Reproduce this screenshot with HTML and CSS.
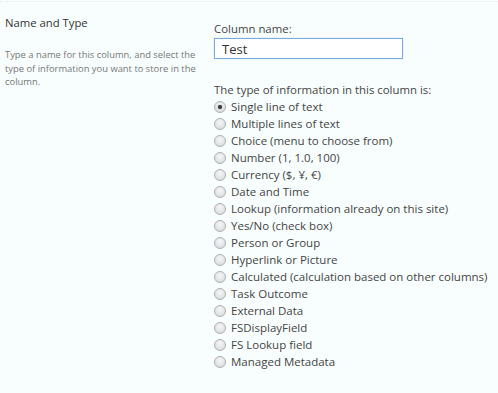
FILE: index.html
```html
<!DOCTYPE html>
<html>
<head>
<meta charset="utf-8">
<link rel="stylesheet" href="styles.css">
</head>
<body>
<div class="section">
  <div class="desc-col">
    <h3 class="title">Name and Type</h3>
    <p class="desc">Type a name for this column, and select the type of information you want to store in the column.</p>
  </div>
  <div class="field-col">
    <label class="label" for="colname">Column name:</label>
    <input id="colname" class="textbox" type="text" value="Test">
    <div class="label type-label">The type of information in this column is:</div>
    <div class="options">
      <label class="opt"><span class="radio checked"></span>Single line of text</label>
      <label class="opt"><span class="radio"></span>Multiple lines of text</label>
      <label class="opt"><span class="radio"></span>Choice (menu to choose from)</label>
      <label class="opt"><span class="radio"></span>Number (1, 1.0, 100)</label>
      <label class="opt"><span class="radio"></span>Currency ($, ¥, €)</label>
      <label class="opt"><span class="radio"></span>Date and Time</label>
      <label class="opt"><span class="radio"></span>Lookup (information already on this site)</label>
      <label class="opt"><span class="radio"></span>Yes/No (check box)</label>
      <label class="opt"><span class="radio"></span>Person or Group</label>
      <label class="opt"><span class="radio"></span>Hyperlink or Picture</label>
      <label class="opt"><span class="radio"></span>Calculated (calculation based on other columns)</label>
      <label class="opt"><span class="radio"></span>Task Outcome</label>
      <label class="opt"><span class="radio"></span>External Data</label>
      <label class="opt"><span class="radio"></span>FSDisplayField</label>
      <label class="opt"><span class="radio"></span>FS Lookup field</label>
      <label class="opt"><span class="radio"></span>Managed Metadata</label>
    </div>
  </div>
</div>
</body>
</html>
```
FILE: styles.css
```css
html, body {
  margin: 0;
  padding: 0;
  background: #f8fefe;
}
body {
  font-family: "Open Sans", "Noto Sans", sans-serif;
  color: #444;
  width: 498px;
  height: 393px;
  overflow: hidden;
}
.section {
  display: flex;
  border-top: 1px dotted #e4eaea;
  margin-top: 1px;
}
.desc-col {
  width: 200px;
  padding-left: 5px;
  box-sizing: border-box;
}
.title {
  margin: 12px 0 0;
  font-size: 11.3px;
  font-weight: normal;
  color: #333;
  line-height: 18px;
}
.desc {
  margin: 16px 0 0;
  font-size: 9.4px;
  color: #777;
  line-height: 13.5px;
}
.field-col {
  margin-left: 14px;
  display: flex;
  flex-direction: column;
  align-items: flex-start;
}
.label {
  font-size: 11.4px;
  line-height: 17px;
  color: #444;
}
.label:first-child {
  margin-top: 18px;
}
.textbox {
  margin-top: 1px;
  width: 189px;
  height: 21px;
  box-sizing: border-box;
  border: 1px solid #7aabdf;
  box-shadow: 0 0 1px #a9cbee;
  background: #fff;
  padding: 0 7px;
  font-family: "Open Sans", sans-serif;
  font-size: 13px;
  color: #333;
  outline: none;
}
.type-label {
  margin-top: 22px;
}
.options {
  display: flex;
  flex-direction: column;
}
.opt {
  display: flex;
  align-items: center;
  height: 17px;
  font-size: 11.5px;
  color: #444;
  white-space: nowrap;
}
.radio {
  width: 12px;
  height: 12px;
  box-sizing: border-box;
  border-radius: 50%;
  border: 1px solid #aeb0b2;
  background: radial-gradient(circle at 50% 35%, #f6f6f6 0%, #e2e3e4 60%, #d2d3d5 100%);
  margin: 0 5px 0 0;
  position: relative;
  flex: none;
}
.radio.checked::after {
  content: "";
  position: absolute;
  left: 3px;
  top: 3px;
  width: 4px;
  height: 4px;
  border-radius: 50%;
  background: #3c3c3c;
  box-shadow: 0 0 1px #555;
}
```
